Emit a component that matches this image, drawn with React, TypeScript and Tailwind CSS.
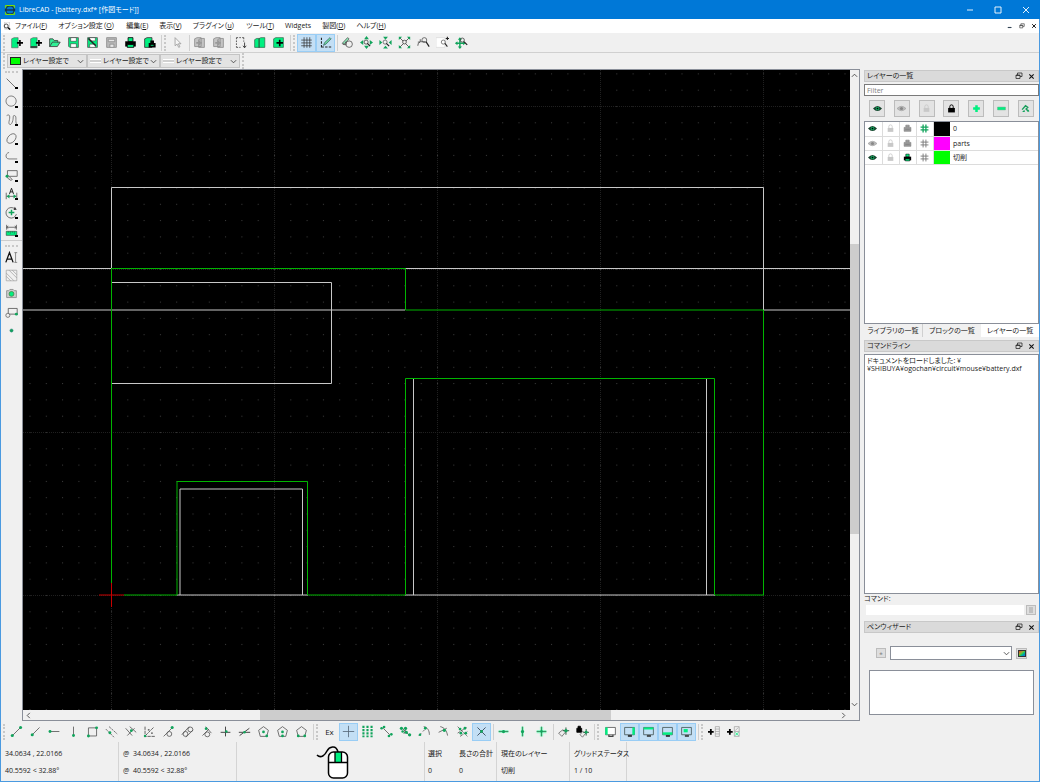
import { useState } from "react";
import type { ReactNode } from "react";

const GREEN = "#00f080";
const DARK = "#3a3a3a";
const SNAP = "#12a45c";

// Every glyph is drawn on a 16x16 grid
const glyphs: Record<string, ReactNode> = {
  newDoc: (
    <>
      <path d="M2 3.5 5 2h5v12.5H2z" fill={GREEN} stroke="#555" strokeWidth=".7" />
      <path d="M8.5 8.5H16M12.2 4.8v7.5" stroke="#000" strokeWidth="2" />
    </>
  ),
  newTemplate: (
    <>
      <path d="M2 3.5 5 2h5v12.5H2z" fill={GREEN} stroke="#555" strokeWidth=".7" />
      <path d="M2 12.5h8v2H2z" fill="#333" />
      <path d="M8.5 8.5H16M12.2 4.8v7.5" stroke="#000" strokeWidth="2" />
    </>
  ),
  open: (
    <path d="M2 13V3.5h4l1.5 2H12V8M2 13l3.5-5.5H15L11.5 13z" fill={GREEN} fillOpacity=".8" stroke={DARK} />
  ),
  save: (
    <>
      <path d="M2 2h12v12H3.5L2 12.500z" fill={GREEN} stroke="#555" />
      <path d="M4.5 2h7v4.5h-7zM4.5 9.5h7V14h-7z" fill="#fff" stroke={DARK} strokeWidth=".7" />
    </>
  ),
  saveAs: (
    <>
      <path d="M2 2h12v12H2z" fill={GREEN} stroke="#555" />
      <path d="M4.5 2h7v4h-7zM4.5 10h7v4h-7z" fill="#fff" stroke={DARK} strokeWidth=".7" />
      <path d="m3 3 9 9" stroke="#222" strokeWidth="1.8" />
    </>
  ),
  saveAll: (
    <>
      <path d="M2 2h12v12H2z" fill="#b8b8b8" stroke="#8b8b8b" />
      <path d="M4 4h8v3H4zM6 10h5v4H6z" fill="#e6e6e6" stroke="#8b8b8b" />
    </>
  ),
  print: (
    <>
      <path d="M5 2h6v5H5z" fill={GREEN} stroke="#000" />
      <path d="M1.5 6.5h13V13h-13z" fill="#000" />
      <path d="M4 10.5h8V14H4z" fill={GREEN} stroke="#000" />
    </>
  ),
  preview: (
    <>
      <path d="M2 3.5 5 2h6v12H2z" fill={GREEN} stroke="#333" />
      <path d="M7 8.5h8.5v5.5H7zM9 5.5h4.5v3H9z" fill="#000" />
      <path d="M9.5 11.5H13" stroke={GREEN} />
    </>
  ),
  cursor: <path d="M5 2v10l2.500-2 2 4 1.500-.8-2-3.700h3.300z" fill="#f5f5f5" stroke="#999" />,
  cut: (
    <>
      <path d="M2 3.5 5 2h5v11H2zM7 4.5 9.5 3H14v11H7z" fill="#c4c4c4" stroke="#8d8d8d" />
      <path d="M4 8.5h7M8 5.5v6" stroke="#999" strokeWidth="2" />
    </>
  ),
  marquee: (
    <>
      <path d="M3 2h9M3 2v12M3 14h5M12 2v5" stroke={DARK} strokeDasharray="2 1.5" />
      <path d="M13 8v6m-2-2 2 2.500 2-2.500" stroke="#222" />
    </>
  ),
  copy: (
    <path d="M2 4.500 4.500 3H8v11H2zM7 3.500 9.500 2h5v12H7z" fill={GREEN} stroke="#2a5a40" strokeWidth=".8" />
  ),
  paste: (
    <>
      <path d="M2 3.500 4.500 2H14v12H2z" fill={GREEN} stroke="#2a5a40" strokeWidth=".8" />
      <path d="M5.500 8.500h8M9.500 4.500v8" stroke="#000" strokeWidth="2" />
    </>
  ),
  grid: <path d="M5 1.500v13M8.500 1.500v13M12 1.500v13M1.500 5h13M1.500 8.500h13M1.500 12h13" stroke="#333" strokeWidth=".9" />,
  draft: (
    <>
      <path d="M3 2v12M3 13.500h12" stroke="#222" strokeWidth="1.300" strokeDasharray="3 1.500" />
      <path d="M5.500 11.500 7 8l6.500-6 1.500 1.500L8.500 10z" fill="#6bd8a0" stroke="#355" strokeWidth=".8" />
    </>
  ),
  redraw: (
    <>
      <path d="M1.500 9 8 2l2 1.500L4 10z" fill="#8ae5b5" stroke="#444" strokeWidth=".8" />
      <circle cx="10" cy="10" r="4" stroke="#555" />
      <path d="M6 7v4M2 10l4 1" stroke="#444" />
    </>
  ),
  zoomIn: (
    <>
      <path d="m8 0 3 4H5zM8 16l-3-4h6zM0 8l4-3v6zM16 8l-4-3v6z" fill={SNAP} />
      <circle cx="7.500" cy="7.500" r="2.500" stroke="#444" />
      <path d="m9 9 3.500 3.500" stroke="#222" strokeWidth="1.500" />
    </>
  ),
  zoomOut: (
    <>
      <path d="m8 4.500-3-3.500h6zM8 12l-3 3.500h6zM4 8 .5 5v6zM12 8l3.500-3v6z" fill={SNAP} />
      <circle cx="7.500" cy="7.500" r="2.500" stroke="#666" />
      <path d="m9 9 3.500 3.500" stroke="#222" strokeWidth="1.500" />
    </>
  ),
  zoomAuto: (
    <>
      <path d="m2 2 12 12M14 2 2 14" stroke="#444" />
      <path d="M1 1h4L1 5zM15 1v4l-4-4zM1 15v-4l4 4zM15 15h-4l4-4z" fill={SNAP} />
      <circle cx="8" cy="7.500" r="2.300" fill="#eee" stroke="#444" />
    </>
  ),
  zoomPrev: (
    <>
      <path d="M1 12a5 5 0 0 1 3-5M4 4v3.500H1M5 7h5" stroke="#444" />
      <circle cx="9" cy="5" r="3" stroke="#555" />
      <path d="m11 7 4 6" stroke="#222" strokeWidth="1.500" />
    </>
  ),
  zoomWindow: (
    <>
      <path d="M0 2h11v12H0z" fill="#fff" stroke="#ddd" />
      <circle cx="9" cy="7.500" r="2.500" stroke="#666" />
      <path d="m11 9 3 4M14 1v4M12 3h4" stroke="#222" strokeWidth="1.300" />
    </>
  ),
  pan: (
    <>
      <path d="M6 3.500v11M1 9h11" stroke={SNAP} strokeWidth="1.800" />
      <path d="m6 1.500 2.500 3h-5zM6 16l2.500-3h-5zM0 9l3-2.500v5zM13 9l-3-2.500v5z" fill={SNAP} />
      <circle cx="9" cy="5" r="2.500" stroke="#444" />
      <path d="m11 7 4 4" stroke="#222" strokeWidth="1.500" />
    </>
  ),
  line: <path d="m2 2 12 12" stroke="#555" />,
  circle: <circle cx="7.500" cy="7.500" r="6.300" stroke="#666" />,
  spline: <path d="M2 2c5-3 4 3 3 7s2 6 4 1 0-9 3-8 0 7 2.500 11" stroke="#666" />,
  ellipse: <ellipse cx="8" cy="8" rx="6.800" ry="4.500" transform="rotate(-48 8 8)" stroke="#666" />,
  polyline: <path d="M5 3C0 4 0 11 5 11h10" stroke="#666" />,
  select: (
    <>
      <path d="M3 2h12v7H3z" stroke="#555" />
      <path d="m4 8 5 5-2 1-4-3z" fill="#ddd" stroke="#666" />
      <circle cx="2.500" cy="9" r="1.800" fill={SNAP} />
    </>
  ),
  dimension: (
    <>
      <path d="M1.500 7v8M14.500 7v8M2 11.500h12" stroke="#555" />
      <path d="m2 11.500 3.500-2.500v5zM14 11.500l-3.500-2.500v5z" fill={SNAP} />
      <path d="m5.500 8.500 2.500-7 2.500 7M6.300 6h3.500" stroke="#222" strokeWidth="1.200" />
    </>
  ),
  modify: (
    <>
      <path d="M12.500 4A6.500 6.500 0 1 0 14 10" stroke="#555" />
      <path d="m12 1 2.500 3.500-4 .5z" fill="#333" />
      <path d="M4.500 8h7M8 4.500v7" stroke={SNAP} strokeWidth="1.800" />
    </>
  ),
  measure: (
    <>
      <path d="M2 1v6M14 1v6M2 4h12M4 2.500 2 4l2 1.500M12 2.500 14 4l-2 1.500" stroke="#555" />
      <path d="M1.500 9h13v5h-13z" fill={GREEN} stroke="#333" strokeWidth=".7" />
      <path d="M4 9v2M6.500 9v3M9 9v2M11.500 9v3" stroke="#333" strokeWidth=".6" />
    </>
  ),
  mtext: (
    <>
      <path d="m1 14 4.500-12L10 14M2.500 10h6" stroke="#111" strokeWidth="1.600" />
      <path d="M13 2v12M11.500 2H15M11.500 14H15" stroke="#777" />
    </>
  ),
  hatch: (
    <path d="M1.500 1.500h13v13h-13zM1.500 5l9.500 9.500M1.500 9 7 14.500M5 1.500 14.500 11M9 1.500l5.500 5.500" stroke="#999" strokeWidth=".8" />
  ),
  image: (
    <>
      <path d="M2 4.500h2.500L6 3h4l1.500 1.500H14V13H2z" fill="#ccc" stroke="#888" />
      <circle cx="8" cy="8.500" r="3" fill={GREEN} stroke="#484" />
    </>
  ),
  block: (
    <>
      <path d="M4 3h11v7H4z" stroke="#555" />
      <circle cx="3.500" cy="11.500" r="2.500" fill="#eee" stroke="#666" />
      <circle cx="14" cy="10" r="1.800" fill={SNAP} />
    </>
  ),
  point: <circle cx="8" cy="8" r="2" fill={SNAP} stroke="#277" strokeWidth=".5" />,
  line2: (
    <>
      <path d="M3 13 13 3" stroke="#555" />
      <circle cx="2.800" cy="13" r="1.900" fill={SNAP} />
      <circle cx="13" cy="3" r="1.900" fill={SNAP} />
    </>
  ),
  lineAngle: (
    <>
      <path d="M4 12 13 3" stroke="#555" />
      <circle cx="4" cy="12" r="1.900" fill={SNAP} />
    </>
  ),
  lineH: (
    <>
      <path d="M2 8h12" stroke="#555" />
      <circle cx="2.500" cy="8" r="1.800" fill={SNAP} />
    </>
  ),
  lineV: (
    <>
      <path d="M8 2v11" stroke="#555" />
      <circle cx="8" cy="13" r="1.800" fill={SNAP} />
    </>
  ),
  rect: (
    <>
      <path d="M3 3.500h10v10H3z" stroke="#555" />
      <circle cx="13" cy="3.500" r="1.800" fill={SNAP} />
      <circle cx="3" cy="13.500" r="1.800" fill={SNAP} />
    </>
  ),
  parallel: (
    <>
      <path d="m1 5 10 10M5 2l10 9" stroke="#555" strokeDasharray="3 1" />
      <circle cx="6" cy="9.500" r="1.800" fill={SNAP} />
    </>
  ),
  parallelPt: (
    <>
      <path d="m2 4 8 9M7 2l8 7M4 13l9-9" stroke="#555" />
      <circle cx="9" cy="7" r="1.700" fill={SNAP} />
    </>
  ),
  bisector: (
    <>
      <path d="M2.500 2v12H15M3 13 13 3" stroke="#444" strokeDasharray="4 1" />
      <path d="M6 6h2M10 10h2" stroke="#444" strokeWidth="1.500" />
      <circle cx="2.500" cy="13.500" r="1.500" fill={SNAP} />
    </>
  ),
  tangent1: (
    <>
      <path d="M2 14 13 3" stroke="#555" />
      <circle cx="9" cy="11" r="3" stroke="#555" />
      <circle cx="12.500" cy="3" r="1.900" fill={SNAP} />
    </>
  ),
  tangent2: (
    <>
      <path d="M1 12 10 2M6 15l9-9" stroke="#555" />
      <circle cx="5.500" cy="11" r="3" stroke="#555" />
      <circle cx="11.500" cy="5.500" r="3" stroke="#555" />
    </>
  ),
  orthTan: (
    <>
      <path d="m3 13 8-8M7 2l7 8" stroke="#555" />
      <circle cx="9" cy="11.500" r="3" stroke="#555" />
      <circle cx="7.500" cy="4.500" r="1.700" fill={SNAP} />
    </>
  ),
  ortho: (
    <>
      <path d="M8 2v12M2 9h12" stroke="#444" strokeWidth="1.200" />
      <circle cx="9" cy="8" r="1.600" fill={SNAP} />
    </>
  ),
  relAngle: (
    <>
      <path d="M1 9h14M2 13l12-9" stroke="#444" strokeWidth="1.200" />
      <circle cx="8" cy="9" r="1.600" fill={SNAP} />
    </>
  ),
  polyCor: (
    <>
      <path d="m8 2 6 4.500L12 14H4L2 6.500z" stroke="#555" />
      <circle cx="8" cy="8.500" r="1.700" fill={SNAP} />
      <circle cx="12" cy="13.500" r="1.700" fill={SNAP} />
    </>
  ),
  polyTan: (
    <>
      <path d="m8 2 6 4.500L12 14H4L2 6.500z" stroke="#555" />
      <circle cx="8" cy="8.500" r="1.700" fill={SNAP} />
      <circle cx="8" cy="13.500" r="1.700" fill={SNAP} />
    </>
  ),
  polySide: (
    <>
      <path d="m8 2 6 4.500L12 14H4L2 6.500z" stroke="#555" />
      <circle cx="4" cy="13.500" r="1.700" fill={SNAP} />
      <circle cx="12" cy="13.500" r="1.700" fill={SNAP} />
    </>
  ),
  free: <path d="M8 1v14M1 8h14" stroke="#567" />,
  snapGrid: <path d="M3 1v14M8 1v14M13 1v14" stroke={SNAP} strokeWidth="2.600" strokeDasharray="2.600 1.400" />,
  snapEnd: (
    <>
      <path d="m4 4 8 8" stroke="#555" />
      <g fill={SNAP}>
        <circle cx="2" cy="4" r="1.600" />
        <circle cx="5" cy="2.500" r="1.600" />
        <circle cx="11" cy="13.500" r="1.600" />
        <circle cx="14" cy="11.500" r="1.600" />
      </g>
    </>
  ),
  snapOn: (
    <>
      <path d="m3 3 10 10M9 4l-3 7" stroke="#555" />
      <g fill={SNAP}>
        <circle cx="3" cy="4" r="2" />
        <circle cx="8" cy="4" r="2" />
        <circle cx="9" cy="9" r="2" />
        <circle cx="4.500" cy="8" r="1.600" />
        <circle cx="13" cy="12" r="2" />
      </g>
    </>
  ),
  snapCenter: (
    <>
      <path d="M7 2c5 1 7 5 7 10M1 13l3-3M6 8l2-2" stroke="#555" />
      <circle cx="9" cy="4" r="1.700" fill={SNAP} />
      <circle cx="2.500" cy="12" r="1.600" fill={SNAP} />
    </>
  ),
  snapMiddle: (
    <>
      <path d="M4 2c5 1 8 5 9 11M2 9l10-5" stroke="#555" />
      <circle cx="9" cy="6.500" r="2" fill={SNAP} />
    </>
  ),
  snapDist: (
    <>
      <path d="m2 2 12 12M2 10l11-7M5 14l9-6" stroke="#555" strokeDasharray="4 1" />
      <g fill={SNAP}>
        <circle cx="5" cy="5" r="1.700" />
        <circle cx="11" cy="4" r="1.700" />
        <circle cx="6" cy="10" r="1.700" />
        <circle cx="12" cy="10" r="1.700" />
      </g>
    </>
  ),
  snapCross: (
    <>
      <path d="m3 3 10 10M13 3 3 13" stroke="#456" strokeWidth="1.200" />
      <circle cx="8" cy="8" r="1.700" fill={SNAP} />
    </>
  ),
  restrictH: (
    <>
      <path d="M2 8h12" stroke="#8ff5c3" strokeWidth="3.500" />
      <path d="M2 8h12" stroke="#2c7a50" />
      <circle cx="8" cy="8" r="2" fill={SNAP} />
    </>
  ),
  restrictV: (
    <>
      <path d="M8 2v12" stroke="#8ff5c3" strokeWidth="3.500" />
      <path d="M8 2v12" stroke="#2c7a50" />
      <circle cx="8" cy="8" r="2" fill={SNAP} />
    </>
  ),
  restrictO: (
    <>
      <path d="M8 2v12M2 8h12" stroke="#8ff5c3" strokeWidth="4" />
      <path d="M8 2v12M2 8h12" stroke="#2c7a50" />
      <circle cx="8" cy="8" r="1.700" fill={SNAP} />
    </>
  ),
  setZero: (
    <>
      <path d="m2 10 5-4 4 2-5 6z" fill="#eee" stroke="#666" />
      <path d="M11 3v9M7 7h8" stroke="#2c5a40" strokeWidth="1.200" />
      <circle cx="11" cy="7" r="2" fill={SNAP} />
    </>
  ),
  lockZero: (
    <>
      <path d="M1 4h6v5H1zM2.500 1.500h3V4h-3z" fill="#000" stroke="#000" />
      <path d="m5 12 3-4 4 2-4 5z" fill="#eee" stroke="#666" />
      <path d="M12.500 5v8M9 9h7" stroke="#2c5a40" strokeWidth="1.200" />
      <circle cx="12.500" cy="9" r="1.800" fill={SNAP} />
    </>
  ),
  dockLeft: (
    <>
      <path d="M2 3h12v9H2z" fill="#fff" stroke="#555" />
      <path d="M1.500 3h3v9h-3z" fill={GREEN} />
      <path d="M6 12v2h5v-2" stroke="#444" strokeWidth="1.500" />
    </>
  ),
  dockRight: (
    <>
      <path d="M2 3h12v9H2z" stroke="#455" />
      <path d="M11.500 3h3v9h-3z" fill={GREEN} />
      <path d="M6 13.500h5" stroke="#222" strokeWidth="2" />
    </>
  ),
  dockTop: (
    <>
      <path d="M2 3h12v9H2z" stroke="#455" />
      <path d="M2 3h12v2.500H2z" fill={GREEN} />
      <path d="M6 13.500h5" stroke="#333" strokeWidth="2" />
    </>
  ),
  dockBottom: (
    <>
      <path d="M2 3h12v9H2z" stroke="#455" />
      <path d="M2 9h12v3H2z" fill={GREEN} />
      <path d="M6 13.500h5" stroke="#222" strokeWidth="2" />
    </>
  ),
  dockFloat: (
    <>
      <path d="M2 3h12v9H2z" stroke="#455" />
      <path d="M4.500 5h5v4h-5z" fill={GREEN} />
      <path d="M6 13.500h5" stroke="#333" strokeWidth="2" />
    </>
  ),
  addMenu: (
    <>
      <path d="M0 8.500h7M3.500 5v7" stroke="#000" strokeWidth="2.200" />
      <path d="M9 2h5v12H9zM9 5h5M9 8h5M9 11h5" stroke="#999" strokeWidth=".8" />
    </>
  ),
  addTool: (
    <>
      <path d="M0 8.500h7M3.500 5v7" stroke="#000" strokeWidth="2.200" />
      <path d="M9 2h6v12H9zM9 8h6M10 7l4-4" stroke="#999" strokeWidth=".8" />
      <path d="M10 13l4-4M10 9l4 4" stroke={GREEN} />
    </>
  ),
  eye: (
    <>
      <path d="M0 8q8-9 16 0-8 9-16 0z" fill="#17402c" />
      <circle cx="8" cy="8" r="3.300" fill={SNAP} />
      <circle cx="8" cy="8" r="1.500" fill="#000" />
    </>
  ),
  eyeOff: (
    <>
      <path d="M0 8q8-8 16 0-8 8-16 0z" fill="#bbb" stroke="#999" />
      <circle cx="8" cy="8" r="2.800" fill="#888" />
    </>
  ),
  lockOff: (
    <>
      <path d="M3 7h10v7H3z" fill="#c8c8c8" />
      <path d="M5 7V4.500a3 3 0 0 1 6 0V7" stroke="#c8c8c8" strokeWidth="1.500" />
    </>
  ),
  lock: (
    <>
      <path d="M2 7h12v8H2z" fill="#000" />
      <path d="M5 7V4.500a3 3 0 0 1 6 0V7" stroke="#000" strokeWidth="1.700" />
    </>
  ),
  plus: <path d="M2 8h12M8 2v12" stroke={GREEN} strokeWidth="4.500" />,
  minus: <path d="M1 5.500h14v5H1z" fill={GREEN} stroke="#5aaa80" strokeWidth=".8" />,
  edit: (
    <>
      <path d="m2 10 6-7 4 3-3 3 4 4" stroke="#199e5c" strokeWidth="2.500" />
      <path d="m2 14 4-4 1 4zM12 9l3 4-3 1z" fill={SNAP} />
    </>
  ),
  printOff: <path d="M5 2h6v4h3v7H2V6h3zM4 9.500h8" fill="#999" stroke="#777" />,
  hash: <path d="M5.500 1v14M10.500 1v14M1 5.500h14M1 10.500h14" stroke={SNAP} strokeWidth="2.300" />,
  hashOff: <path d="M5.500 1v14M10.500 1v14M1 5.500h14M1 10.500h14" stroke="#777" strokeWidth="1.600" />,
  float: <path d="M5 6V2h9v7h-4M2 6h8v7H2zM2 7h8" stroke="#222" strokeWidth="1.500" />,
  close: <path d="m3 3 10 10M13 3 3 13" stroke="#111" strokeWidth="2.500" />,
};

const Glyph = ({ name, className = "size-[13px]" }: { name: string; className?: string }) => (
  <svg viewBox="0 0 16 16" fill="none" className={`${className} shrink-0`} aria-hidden="true">
    {glyphs[name]}
  </svg>
);

const Chevron = ({ d, className }: { d: string; className?: string }) => (
  <svg viewBox="0 0 8 8" fill="none" className={`size-[7px] shrink-0 ${className ?? ""}`}>
    <path d={d} stroke="#444" />
  </svg>
);

const DOWN = "m1 2.500 3 3 3-3";

const menus = [
  ["ファイル(", "F", ")"],
  ["オプション設定（", "O", "）"],
  ["編集(", "E", ")"],
  ["表示(", "V", ")"],
  ["プラグイン（", "u", "）"],
  ["ツール(", "T", ")"],
  ["Widgets", "", ""],
  ["製図(", "D", ")"],
  ["ヘルプ(", "H", ")"],
];

// "|" is a separator, "#" starts a new toolbar
const topTools =
  "newDoc newTemplate open save saveAs saveAll print preview | # cursor | cut cut | marquee copy paste | # grid draft | redraw zoomIn zoomOut zoomAuto zoomPrev zoomWindow pan".split(" ");
const bottomTools =
  "line2 lineAngle lineH lineV rect parallel parallelPt bisector tangent1 tangent2 orthTan ortho relAngle polyCor polyTan polySide | # Ex free snapGrid snapEnd snapOn snapCenter snapMiddle snapDist snapCross | restrictH restrictV restrictO | setZero lockZero | # dockLeft dockRight dockTop dockBottom dockFloat | # addMenu addTool".split(" ");
const drawTools = "line circle spline ellipse polyline select dimension modify measure".split(" ");
const extraTools = "mtext hatch image block point".split(" ");

const initialOn = ["grid", "draft", "free", "snapCross", "dockRight", "dockTop", "dockBottom", "dockFloat"];

const ToolRow = ({ tools }: { tools: string[] }) => {
  const [on, setOn] = useState(initialOn);
  const toggle = (name: string) =>
    setOn(on.includes(name) ? on.filter((n) => n !== name) : [...on, name]);

  return (
    <>
      <Grip />
      {tools.map((name, index) => {
        if (name === "|") {
          return <span key={index} className="h-4 w-[3px] shrink-0 border-r border-[#d0d0d0]" />;
        }
        if (name === "#") return <Grip key={index} />;
        return (
          <button
            key={index}
            aria-label={name}
            onClick={() => toggle(name)}
            className={`flex h-[18px] w-[19px] shrink-0 items-center justify-center border text-[8px] ${
              on.includes(name) ? "border-[#99cdf5] bg-[#c3dff5]" : "border-transparent"
            }`}
          >
            {name === "Ex" ? "Ex" : <Glyph name={name} />}
          </button>
        );
      })}
    </>
  );
};

const Grip = () => (
  <span className="flex h-4 w-[6px] shrink-0 justify-center">
    <span className="w-0 border-l-2 border-dotted border-[#c8c8c8]" />
  </span>
);

const SideTools = ({ tools, arrows }: { tools: string[]; arrows?: boolean }) => (
  <>
    <span className="mx-1 mt-0.5 mb-px border-t-2 border-dotted border-[#c8c8c8]" />
    <div className={`grid auto-rows-fr ${arrows ? "mb-0.5 h-[167px] border-b border-[#ccc]" : "h-[92px]"}`}>
      {tools.map((name) => (
        <button key={name} aria-label={name} className="relative flex items-center justify-center">
          <Glyph name={name} />
          {arrows && <span className="absolute right-1 bottom-[3px] h-0.5 w-[3px] bg-black" />}
        </button>
      ))}
    </div>
  </>
);

const PenSelect = ({ label, width, swatch }: { label: string; width: string; swatch?: boolean }) => (
  <div className={`relative flex h-3.5 items-center border border-[#c4c4c4] bg-[#e3e3e3] pl-0.5 ${width}`}>
    {swatch ? (
      <span className="h-2 w-[11px] shrink-0 border border-[#222] bg-[#00ff00]" />
    ) : (
      <span className="h-1 w-[11px] shrink-0 border-y border-white bg-[#d0d0d0]" />
    )}
    <select aria-label={label} className="min-w-0 flex-1 appearance-none bg-transparent pl-0.5 text-[7px]">
      <option>レイヤー設定で</option>
    </select>
    <Chevron d={DOWN} className="pointer-events-none absolute right-0.5" />
  </div>
);

const GridLines = () => (
  <g stroke="#202020" strokeDasharray="1 1">
    {[111.5, 274.5, 437.5, 600.5, 763.5].map((x) => (
      <line key={x} x1={x} x2={x} y1="70" y2="2000" />
    ))}
    {[106.5, 269.5, 432.5, 595.5].map((y) => (
      <line key={y} x1="23" x2="3000" y1={y} y2={y} />
    ))}
  </g>
);

const Drawing = () => (
  <svg className="block min-h-0 min-w-0 flex-1 bg-black" fill="none" role="img" aria-label="battery.dxf">
    <defs>
      <pattern id="dots" x="111" y="106" width="16.3" height="16.3" patternUnits="userSpaceOnUse">
        <rect width="1" height="1" fill="#404040" />
      </pattern>
    </defs>
    <g transform="translate(-23 -70)">
      <rect x="23" y="70" width="3000" height="2000" fill="url(#dots)" />
      <GridLines />
      <g stroke="#c8c8c8">
        <path d="M111.500 268V187.500h652V310" />
        <path d="M23 268.500h88M405 268.500h2600M23 310h382M764 310h2300" />
        <path d="M112 282.500h219.500v101H112" />
        <path d="M413.500 379v216M706.500 379v216M405 595h310" />
        <path d="M180 595V489h122.500V595M177 595h131" />
      </g>
      <g stroke="#00b400">
        <path d="M111.500 595V268.500h294V310H763.500V595M405 595h-97M715 595h49M124 595h53" />
        <path d="M405.500 595V378.500h309V595M177 595V481.500h130.500V595" />
      </g>
      <path d="M99 595h25M111.500 583v24" stroke="#c80000" />
    </g>
  </svg>
);

const DockHeader = ({ title }: { title: string }) => (
  <div className="flex h-3 shrink-0 items-center gap-[5px] border border-[#c8c8c8] bg-[#dadada] px-0.5 pr-[3px]">
    <h2 className="flex-1">{title}</h2>
    <button aria-label="Float">
      <Glyph name="float" className="size-2" />
    </button>
    <button aria-label="Close">
      <Glyph name="close" className="size-[7px]" />
    </button>
  </div>
);

const layers = [
  { name: "0", icons: ["eye", "lockOff", "printOff", "hash"], color: "bg-black" },
  { name: "parts", icons: ["eyeOff", "lockOff", "printOff", "hashOff"], color: "bg-[#ff00ff]" },
  { name: "切削", icons: ["eye", "lockOff", "print", "hashOff"], color: "bg-[#00ff00]" },
];

const LayerDock = () => (
  <section className="flex min-h-0 flex-1 flex-col">
    <DockHeader title="レイヤーの一覧" />
    <input
      aria-label="Filter"
      placeholder="Filter"
      className="mt-0.5 h-3 shrink-0 border border-[#7a7a7a] bg-white px-0.5 text-[7px] leading-[10px] placeholder:text-[#808080]"
    />
    <div className="flex shrink-0 justify-between px-[5px] py-1">
      {["eye", "eyeOff", "lockOff", "lock", "plus", "minus", "edit"].map((name) => (
        <button
          key={name}
          aria-label={name}
          className="flex h-[17px] w-4 items-center justify-center border border-[#bcbcbc] bg-[#e3e3e3]"
        >
          <Glyph name={name} className="size-[9px]" />
        </button>
      ))}
    </div>
    <div className="min-h-0 flex-1 border border-[#8a8f99] bg-white">
      <table className="w-full border-collapse">
        <tbody>
          {layers.map((layer) => (
            <tr key={layer.name} className="h-[14px] border-b border-[#dcdcdc]">
              {layer.icons.map((icon, index) => (
                <td key={index} className="w-[17px] border-r border-[#dcdcdc] p-0 pl-[3px]">
                  <Glyph name={icon} className="size-[9px]" />
                </td>
              ))}
              <td className={`w-[17px] ${layer.color}`} />
              <td className="p-0 pl-[3px] leading-none">{layer.name}</td>
            </tr>
          ))}
        </tbody>
      </table>
    </div>
  </section>
);

const DockTabs = () => (
  <div className="mb-[3px] flex h-[13px] shrink-0">
    <button className="flex-1 border-r border-[#d0d0d0]">ライブラリの一覧</button>
    <button className="flex-1">ブロックの一覧</button>
    <button className="flex-1 bg-white">レイヤーの一覧</button>
  </div>
);

const CommandDock = () => (
  <section className="flex min-h-0 flex-1 flex-col">
    <DockHeader title="コマンドライン" />
    <div className="mt-0.5 min-h-0 flex-1 border border-[#8a8f99] bg-white px-0.5 py-0.5 leading-[8px]">
      <p>ドキュメントをロードしました: ¥</p>
      <p>¥SHIBUYA¥ogochan¥circuit¥mouse¥battery.dxf</p>
    </div>
  </section>
);

const PenDock = () => (
  <section className="flex shrink-0 flex-col">
    <label htmlFor="command" className="h-2.5 leading-[9px]">
      コマンド:
    </label>
    <div className="mb-[6px] flex h-[11px] items-center gap-0.5 pr-[3px] pl-0.5">
      <input id="command" className="h-2.5 min-w-0 flex-1 bg-white px-0.5" />
      <button aria-label="Options" className="flex size-2.5 items-center justify-center border border-[#bcbcbc] bg-[#dedede] text-[#999]">
        <span className="h-1.5 w-1 bg-[#c0c0c0]" />
      </button>
    </div>
    <DockHeader title="ペンウィザード" />
    <div className="flex items-center gap-1 px-3 pt-[13px] pb-2.5">
      <button aria-label="Add" className="flex size-2.5 items-center justify-center border border-[#bcbcbc] bg-[#dedede] text-[6px] text-[#777]">
        ±
      </button>
      <div className="relative flex h-[14px] flex-1 items-center">
        <select aria-label="Color" className="h-full w-full appearance-none border border-[#8a8f99] bg-white" />
        <Chevron d={DOWN} className="pointer-events-none absolute right-0.5" />
      </div>
      <button aria-label="Pick color" className="flex size-[11px] items-center justify-center border border-[#bcbcbc] bg-[#dedede]">
        <span className="h-[7px] w-2 border border-[#333] bg-linear-to-br from-[#e02020] via-[#30d040] to-[#3050f0]" />
      </button>
    </div>
    <div className="mx-[5px] mb-1.5 h-[45px] border border-[#8a8f99] bg-white" />
  </section>
);

const StatusCell = ({ lines, className }: { lines: string[]; className: string }) => (
  <div className={`flex flex-col justify-between border-r border-[#d4d4d4] pt-[7px] pb-[5px] pl-1 ${className}`}>
    {lines.map((line) => (
      <span key={line} className="leading-[10px] whitespace-pre">
        {line}
      </span>
    ))}
  </div>
);

const StatusBar = () => (
  <footer className="flex h-[39px] shrink-0">
    <StatusCell className="w-[118px]" lines={["34.0634 , 22.0166", "40.5592 < 32.88°"]} />
    <StatusCell className="w-[118px]" lines={["@  34.0634 , 22.0166", "@  40.5592 < 32.88°"]} />
    <div className="flex w-[188px] justify-center border-r border-[#d4d4d4] pt-[3px] pl-1">
      <svg viewBox="0 0 33 35" fill="none" className="h-[35px] w-[33px]">
        <path d="M1 10c4 4 8 0 10-4S20-1 22 7" stroke="#000" strokeWidth="1.600" />
        <rect x="12.500" y="7" width="19" height="26" rx="5" fill="#fff" />
        <path d="M19 7h6.500v10H19z" fill={GREEN} />
        <path d="M12.500 17.500h19M19 7v10M25.500 7v10" stroke="#000" strokeWidth="1.300" />
        <rect x="12.500" y="7" width="19" height="26" rx="5" stroke="#000" strokeWidth="1.500" />
      </svg>
    </div>
    <div className="flex w-[72px] border-r border-[#d4d4d4]">
      <div className="flex w-8 flex-col justify-between pt-[7px] pb-[5px] pl-[3px] leading-[10px]">
        <span>選択</span>
        <span>0</span>
      </div>
      <div className="flex flex-col justify-between pt-[7px] pb-[5px] pl-0.5 leading-[10px]">
        <span>長さの合計</span>
        <span>0</span>
      </div>
    </div>
    <StatusCell className="w-[73px]" lines={["現在のレイヤー", "切削"]} />
    <StatusCell className="w-[57px] whitespace-nowrap" lines={["グリッドステータス", "1 / 10"]} />
  </footer>
);

const App = () => (
  <div className="flex h-screen w-full flex-col overflow-hidden bg-[#f0f0f0] font-['Open_Sans','Noto_Sans_CJK_JP',sans-serif] text-[7px] leading-[10px] text-[#1a1a1a] [font-feature-settings:'palt']">
    <header className="flex h-[19px] shrink-0 items-center bg-[#0078d7] pl-1 text-white">
      <svg viewBox="0 0 16 16" fill="none" className="mr-[3px] size-[12px]">
        <circle cx="8" cy="8" r="5.500" stroke="#2a3a20" strokeWidth="1.500" />
        <path d="M2 2h12M2 14h12M2 5V2M14 5V2M2 11v3M14 11v3" stroke="#7be000" strokeWidth="1.500" />
        <path d="M1 8h14" stroke="#123" strokeWidth="1.500" />
      </svg>
      <h1 className="flex-1">LibreCAD - [battery.dxf* [作図モード]]</h1>
      {["M1 4h6", "M1 1h6v6H1z", "m1 1 6 6M7 1 1 7"].map((d) => (
        <button key={d} aria-label="Window" className="flex w-7 justify-center">
          <svg viewBox="0 0 8 8" fill="none" className="size-2">
            <path d={d} stroke="#fff" strokeWidth=".9" />
          </svg>
        </button>
      ))}
    </header>

    <div className="flex min-h-0 flex-1 flex-col border-x border-b border-[#4a9ae0]">
      <nav className="flex h-[14px] shrink-0 items-center bg-white pl-0.5">
        <svg viewBox="0 0 10 10" fill="none" className="mr-1 size-2">
          <path d="M2 0h6v9H2z" fill="#fff" stroke="#ccc" />
          <circle cx="4" cy="5" r="2.500" stroke="#222" />
          <path d="m6 7 3 2.500" stroke="#000" strokeWidth="1.600" />
        </svg>
        <div className="flex flex-1 gap-[11px]">
          {menus.map(([before, key, after]) => (
            <button key={before} className="whitespace-nowrap">
              {before}
              <u>{key}</u>
              {after}
            </button>
          ))}
        </div>
        <div className="flex items-center gap-1.5 pr-0.5">
          <svg viewBox="0 0 8 8" className="size-1.5">
            <path d="M1 6h5" stroke="#345" strokeWidth="1.500" />
          </svg>
          <Glyph name="float" className="size-1.5" />
          <Glyph name="close" className="size-1.5" />
        </div>
      </nav>

      <div className="flex h-5 shrink-0 items-center border-b border-[#d0d0d0]">
        <ToolRow tools={topTools} />
      </div>
      <div className="flex h-4 shrink-0 items-center">
        <Grip />
        <div className="flex">
          <PenSelect label="Pen color" width="w-20" swatch />
          <PenSelect label="Pen width" width="w-[73px]" />
          <PenSelect label="Line type" width="w-20" />
        </div>
        <Grip />
      </div>

      <main className="flex min-h-0 flex-1">
        <aside className="flex w-[21px] shrink-0 flex-col">
          <SideTools tools={drawTools} arrows />
          <SideTools tools={extraTools} />
        </aside>

        <div className="flex min-w-0 flex-1 flex-col border border-[#8a8f99]">
          <div className="flex min-h-0 flex-1">
            <Drawing />
            <div className="flex w-[9px] shrink-0 flex-col items-center bg-[#f0f0f0] py-0.5">
              <Chevron d="m1 5.500 3-3 3 3" />
              <div className="flex w-full flex-1 flex-col">
                <span className="flex-[165]" />
                <span className="flex-[289] bg-[#cdcdcd]" />
                <span className="flex-[167]" />
              </div>
              <Chevron d={DOWN} />
            </div>
          </div>
          <div className="flex h-2.5 shrink-0 items-center bg-[#f0f0f0] pr-3 pl-0.5">
            <Chevron d="m5.500 1-3 3 3 3" />
            <div className="flex h-full flex-1">
              <span className="flex-[228]" />
              <span className="flex-[351] bg-[#cdcdcd]" />
              <span className="flex-[229]" />
            </div>
            <Chevron d="m2.500 1 3 3-3 3" />
          </div>
        </div>

        <aside className="ml-1 flex w-[175px] shrink-0 flex-col pt-px">
          <LayerDock />
          <DockTabs />
          <CommandDock />
          <PenDock />
        </aside>
      </main>

      <div className="flex h-[21px] shrink-0 items-center">
        <ToolRow tools={bottomTools} />
      </div>
      <StatusBar />
    </div>
  </div>
);

export default App;
